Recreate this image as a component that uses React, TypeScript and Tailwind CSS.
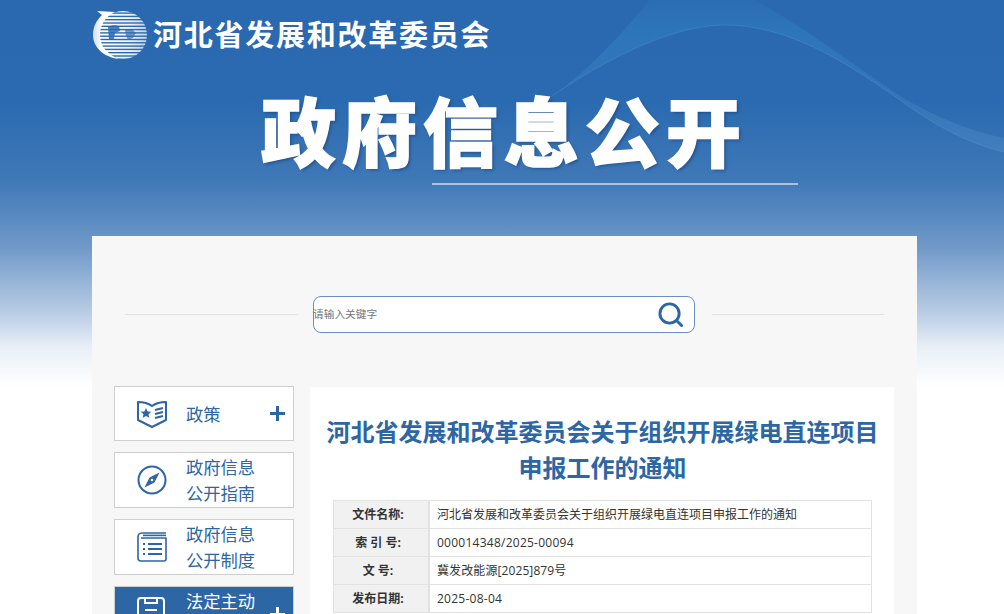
const FONT = "font-['Open_Sans','Noto_Sans_CJK_SC',sans-serif]";

const metaRows = [
  { label: "文件名称:", value: "河北省发展和改革委员会关于组织开展绿电直连项目申报工作的通知", track: "" },
  { label: "索 引 号:", value: "000014348/2025-00094", track: "tracking-[0.25px]" },
  { label: "文 号:", value: "冀发改能源[2025]879号", track: "tracking-[0.1px]" },
  { label: "发布日期:", value: "2025-08-04", track: "tracking-[0.25px]" },
];

function Logo() {
  const rows = Array.from({ length: 15 }, (_, i) => 0.5 + i * 3.3);
  return (
    <svg width="54" height="50" viewBox="0 0 54 50" className="shrink-0">
      <defs>
        <linearGradient id="crescent" x1="0" x2="1" y1="0" y2="0">
          <stop offset="0" stopColor="#cfdeef" />
          <stop offset="0.35" stopColor="#ffffff" />
          <stop offset="1" stopColor="#ffffff" />
        </linearGradient>
        <linearGradient id="stripe" x1="0" x2="1" y1="0" y2="0">
          <stop offset="0" stopColor="#ffffff" />
          <stop offset="0.6" stopColor="#eef3fa" />
          <stop offset="1" stopColor="#b8cde6" />
        </linearGradient>
        <clipPath id="globe">
          <circle cx="30" cy="25" r="24" />
        </clipPath>
      </defs>
      <path d="M4 1 L22 2 C12 7 7 15 7 25 C7 35 13 44 26 49 C10 47 0 37 0 25 C0 15 5 9 9 5 Z" fill="url(#crescent)" />
      <g clipPath="url(#globe)">
        {rows.map((y) => (
          <rect key={y} x="6" y={y} width="50" height="1.9" fill="url(#stripe)" />
        ))}
        <path d="M15 17 C18 15 23 15 26 16 L27 21 L22 23 L21 29 L16 30 Z" fill="#2a6ab0" opacity="0.85" />
        <path d="M32 20 L39 19 L43 23 L40 28 L35 30 L33 26 Z" fill="#2a6ab0" opacity="0.65" />
      </g>
    </svg>
  );
}

function Wave() {
  return (
    <svg className="absolute left-0 top-0" width="1004" height="240" viewBox="0 0 1004 240" fill="none">
      <defs>
        <linearGradient id="band" x1="0" x2="0" y1="0" y2="1">
          <stop offset="0" stopColor="#3186c6" stopOpacity="0.12" />
          <stop offset="0.2" stopColor="#3186c6" stopOpacity="0.42" />
          <stop offset="0.6" stopColor="#4a90cc" stopOpacity="0.28" />
          <stop offset="1" stopColor="#6aa4d8" stopOpacity="0.22" />
        </linearGradient>
      </defs>
      <path
        d="M552 96 C590 70 625 30 650 0 L755 0 C800 25 850 62 900 96 C940 120 975 132 1004 138 L1004 152 C975 145 940 130 900 100 C850 65 790 25 725 25 C680 25 620 50 552 96 Z"
        fill="url(#band)"
      />
      <path d="M552 96 C620 50 680 25 725 25 C790 25 850 65 900 100 C940 130 975 145 1004 152" stroke="#6fb0e0" strokeOpacity="0.22" />
    </svg>
  );
}

function MapIcon() {
  return (
    <svg width="30" height="28" viewBox="0 0 30 28" fill="none" stroke="#2c66a4" strokeWidth="2">
      <path d="M1 2 C6 2 11 3 15 6 C19 3 24 2 29 2 V20 L15 27 L1 20 Z" strokeLinejoin="round" />
      <path d="M9 8 l1.6 3.4 3.6 .4 -2.7 2.4 .8 3.6 -3.3 -1.9 -3.3 1.9 .8 -3.6 -2.7 -2.4 3.6 -.4 Z" fill="#2c66a4" stroke="none" />
      <path d="M18 10 L26 8 M18 14 L26 12 M18 18 L26 16" />
    </svg>
  );
}

function CompassIcon() {
  return (
    <svg width="30" height="30" viewBox="0 0 30 30" fill="none">
      <circle cx="15" cy="15" r="13.5" stroke="#2c66a4" strokeWidth="2" />
      <path d="M22.5 7.5 L17.5 17.5 L7.5 22.5 L12.5 12.5 Z" fill="#2c66a4" />
      <circle cx="15" cy="15" r="1.3" fill="#fff" />
    </svg>
  );
}

function ListIcon() {
  return (
    <svg width="30" height="30" viewBox="0 0 30 30" fill="none" stroke="#2c66a4" strokeWidth="1.6">
      <path d="M29 1 H5 C2 1 1 3 1 5 V26 C1 28 2 29 4 29 H27 C28 29 29 28 29 27 V6 H4" strokeLinejoin="round" />
      <path d="M29 3.4 H6" />
      <path d="M6 12 H8 M11 12 H25 M6 17 H8 M11 17 H25 M6 22 H8 M11 22 H25" strokeWidth="2" />
    </svg>
  );
}

function ClipIcon() {
  return (
    <svg width="28" height="34" viewBox="0 0 28 34" fill="none" stroke="#ffffff" strokeWidth="2">
      <rect x="1" y="1" width="26" height="32" rx="3" />
      <path d="M8 1 V6 H20 V1 M8 13 H20 M8 19 H16" />
    </svg>
  );
}

function Plus({ white }: { white?: boolean }) {
  return (
    <div className="relative ml-auto mr-[1px] h-[15px] w-[15px] shrink-0">
      <div className={`absolute left-0 top-[6px] h-[2.5px] w-[15px] ${white ? "bg-white" : "bg-[#2c66a4]"}`} />
      <div className={`absolute left-[6px] top-0 h-[15px] w-[2.5px] ${white ? "bg-white" : "bg-[#2c66a4]"}`} />
    </div>
  );
}

function NavItem({ icon, lines, plus, active, h }: { icon: React.ReactNode; lines: string[]; plus?: boolean; active?: boolean; h: string }) {
  return (
    <div className={`flex shrink-0 items-center border border-[#cfcfcf] pl-[22px] pr-[7px] ${h} ${active ? "bg-[#2c66a4] text-white" : "bg-white text-[#2c66a4]"}`}>
      <div className="flex w-[49px] shrink-0 items-center">{icon}</div>
      <div className="pt-[2px] text-[17.3px] leading-[26px]">
        {lines.map((l, i) => (
          <div key={i}>{l}</div>
        ))}
      </div>
      {plus && <Plus white={active} />}
    </div>
  );
}

export default function App() {
  return (
    <div className={`relative h-[614px] overflow-hidden bg-[linear-gradient(180deg,#2a69b0_0px,#2a6ab0_100px,#3f78b7_180px,#7099c8_247px,#b9cde5_313px,#e8eff7_347px,#ffffff_387px)] ${FONT}`}>
      <Wave />
      <div className="relative flex flex-col">
        <header className="flex h-[70px] items-center gap-[6px] pl-[93px]">
          <Logo />
          <div className="text-[29px] font-bold leading-[40px] tracking-[1.75px] text-white">河北省发展和改革委员会</div>
        </header>

        <div className="flex h-[166px] flex-col">
          <h1 className="pl-[261px] pt-[11px] text-[75px] font-black leading-[103px] tracking-[6px] text-white [-webkit-text-stroke:1.5px_white] [text-shadow:2px_2px_3px_rgba(20,50,100,0.5)]">
            政府信息公开
          </h1>
          <div className="ml-[432px] mt-[-1px] h-[2px] w-[366px] bg-[#a9c4e2]" />
        </div>

        <main className="ml-[92px] flex h-[400px] w-[825px] flex-col bg-[#f7f7f7]">
          <div className="flex items-center pl-[33px] pr-[33px] pt-[60px]">
            <div className="h-px w-[173px] bg-[#e3e3e3]" />
            <div className="ml-[15px] flex h-[37px] w-[382px] items-center justify-between rounded-[8px] border border-[#6c8dc4] bg-white pr-[11px]">
              <span className="ml-[-1px] text-[10.7px] text-[#777]">请输入关键字</span>
              <svg width="25" height="25" viewBox="0 0 26 26" fill="none" stroke="#2c66a4" strokeWidth="3">
                <circle cx="12" cy="12" r="10" />
                <path d="M19.5 19.5 L24.5 24.5" strokeLinecap="round" />
              </svg>
            </div>
            <div className="ml-[17px] h-px flex-1 bg-[#e3e3e3]" />
          </div>

          <div className="flex gap-[16px] pl-[22px] pr-[23px] pt-[53px]">
            <aside className="flex w-[180px] shrink-0 flex-col gap-[11px]">
              <NavItem h="h-[55px]" icon={<MapIcon />} lines={["政策"]} plus />
              <NavItem h="h-[56px]" icon={<CompassIcon />} lines={["政府信息", "公开指南"]} />
              <NavItem h="h-[56px]" icon={<ListIcon />} lines={["政府信息", "公开制度"]} />
              <NavItem h="h-[56px]" icon={<ClipIcon />} lines={["法定主动", "\u00a0"]} plus active />
            </aside>

            <section className="mt-[1px] flex-1 bg-white pl-[23px] pr-[22px] pt-[27px]">
              <h2 className="mx-[-10px] text-center text-[24px] font-bold leading-[36px] text-[#2c66a4]">
                河北省发展和改革委员会关于组织开展绿电直连项目
                <br />
                申报工作的通知
              </h2>
              <div className="mt-[14px] border border-b-0 border-[#e2e2e2] text-[12px]">
                {metaRows.map((r) => (
                  <div key={r.label} className="flex h-[28px] border-b border-[#e2e2e2]">
                    <div className="flex w-[96px] shrink-0 items-center justify-center border-r-2 border-[#e2e2e2] bg-[#f1f1f1] pr-[6px] font-bold text-[#333]">
                      {r.label}
                    </div>
                    <div className={`flex items-center pl-[7px] text-[#333] ${r.track}`}>{r.value}</div>
                  </div>
                ))}
              </div>
            </section>
          </div>
        </main>
      </div>
    </div>
  );
}
